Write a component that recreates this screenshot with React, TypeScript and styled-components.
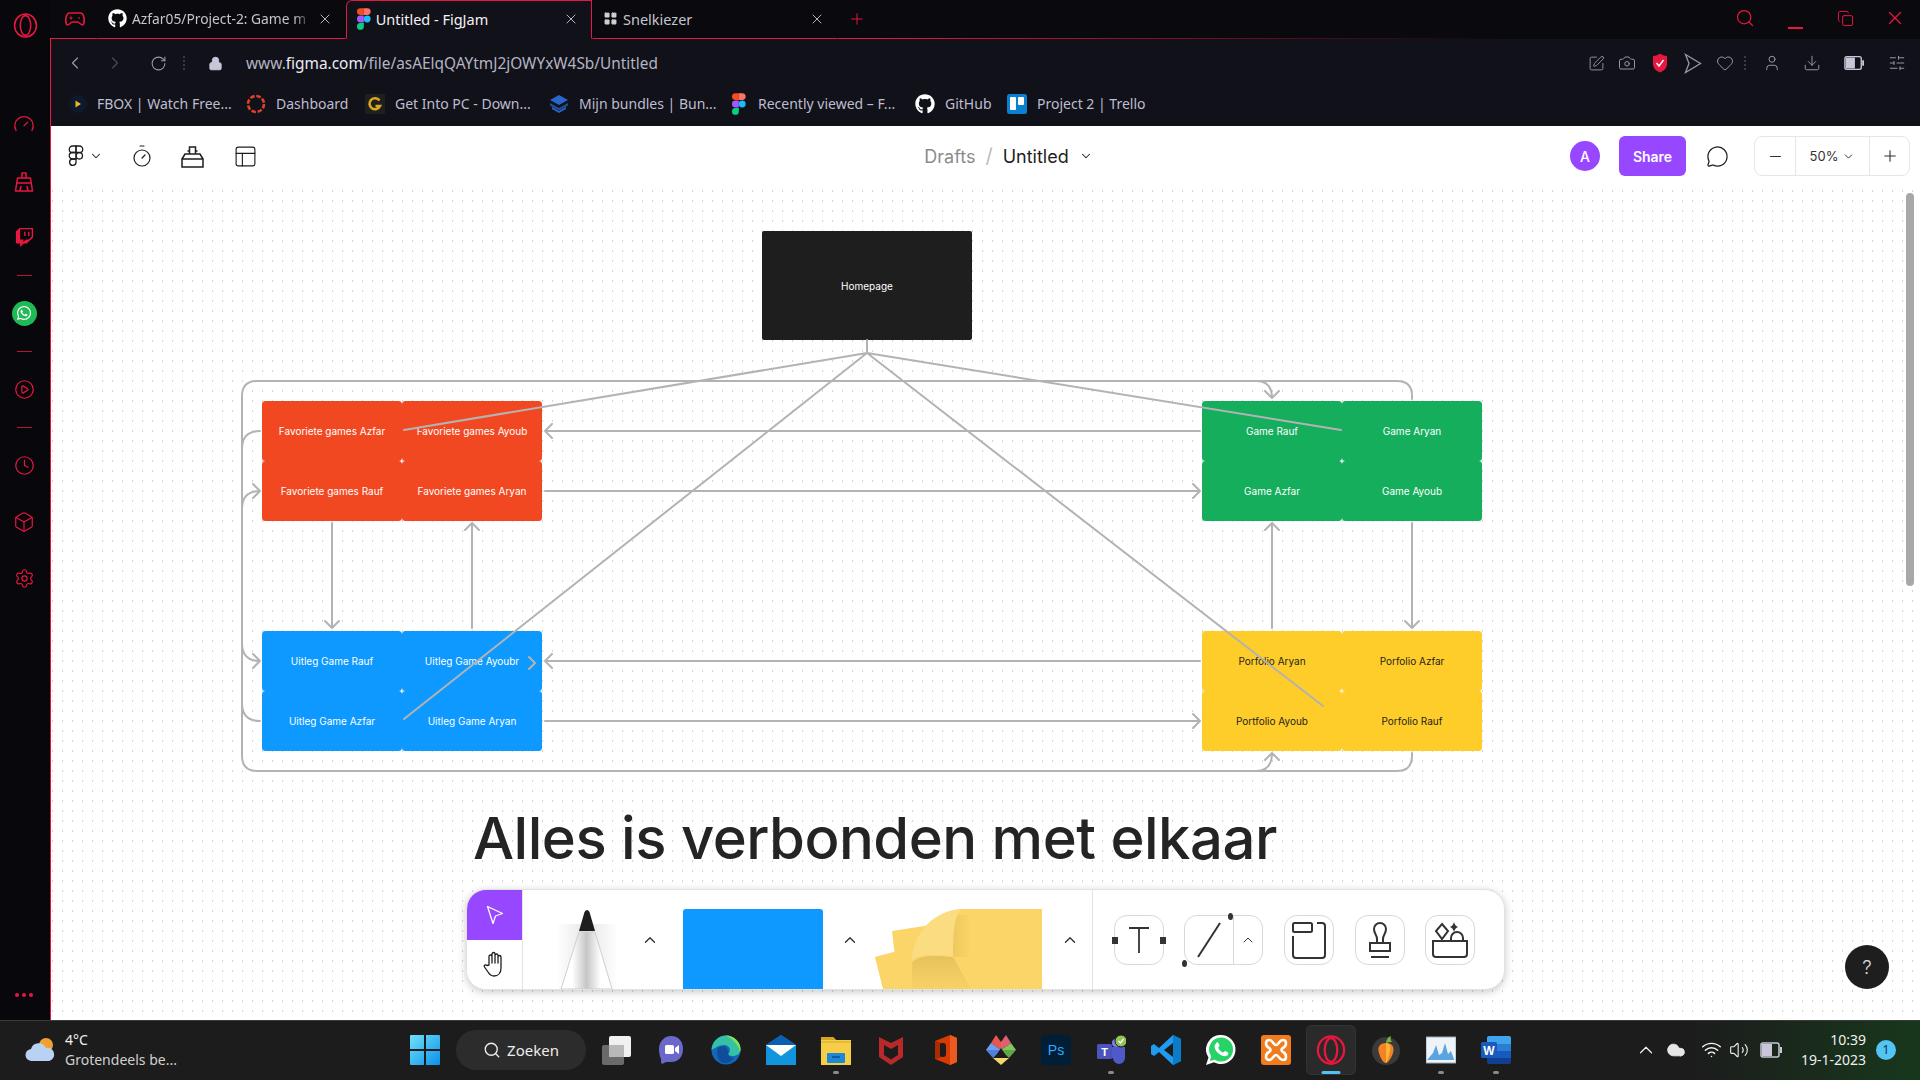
import React from "react";
import styled, { createGlobalStyle } from "styled-components";
import {
  ChevronLeft, ChevronRight, RotateCw, Lock, Search, X, Plus, Minus, Copy, SquarePen, Camera, Heart, User,
  Download, SlidersHorizontal, Timer, PanelsTopLeft, MessageCircle, ChevronDown, ChevronUp, CirclePlay, Clock, Box,
  Settings, Gauge, Cloud, Wifi, Volume2, LayoutGrid,
} from "lucide-react";
import { FaGithub, FaTwitch, FaWhatsapp } from "react-icons/fa";

const Global = createGlobalStyle`
  html, body { margin: 0; padding: 0; background: #000; }
  * { box-sizing: border-box; }
`;

const red = "#e8173f";
const ui = `"Noto Sans", "Open Sans", sans-serif`;
const inter = `Inter, "Noto Sans", sans-serif`;

const Screen = styled.div`
  width: 1920px; height: 1080px; display: flex; flex-direction: column; overflow: hidden; font-family: ${ui};
`;
const Main = styled.div`display: flex; height: 1020px;`;

/* ---- left rail ---- */
const Side = styled.aside`width: 51px; display: flex; flex-direction: column; background: #07070c;`;
const SideLogo = styled.div`height: 38px; padding: 13px 1px 0 0; display: flex; justify-content: center; color: ${red};`;
const Rail = styled.div`
  flex: 1; display: flex; flex-direction: column; align-items: center; padding: 67px 2px 18px 0;
  border-right: 1px solid ${red}; color: ${red};
`;
const RailSlot = styled.div<{ $gap?: number }>`
  height: 38px; margin-top: ${p => p.$gap || 0}px; display: flex; align-items: center; justify-content: center; flex: none;
`;
const RailSep = styled.div`width: 15px; height: 1px; background: ${red}; opacity: .8;`;
const GreenDot = styled.div`
  width: 25px; height: 25px; border-radius: 50%; background: #1fb955; color: #fff; display: flex; align-items: center; justify-content: center;
`;
const RailDots = styled.div`margin-top: auto; display: flex; gap: 3px; height: 14px; align-items: center;`;
const RailDot = styled.i`width: 4px; height: 4px; border-radius: 50%; background: ${red}; display: block;`;

/* ---- browser chrome ---- */
const Content = styled.div`flex: 1; display: flex; flex-direction: column; min-width: 0; background: #11111a;`;
const TabBar = styled.div`height: 39px; display: flex; background: #09090e;`;
const GameSlot = styled.div`
  width: 46px; display: flex; align-items: center; justify-content: center; color: ${red}; border-bottom: 1px solid ${red}; padding-left: 2px;
`;
const Tab = styled.div<{ $active?: boolean; $w: number }>`
  width: ${p => p.$w}px; display: flex; align-items: center; gap: 5px; padding: 0 12px 2px 10px; font-size: 14.5px; flex: none;
  color: ${p => (p.$active ? "#f2f2f6" : "#c4c4cc")};
  background: ${p => (p.$active ? "#11111a" : "transparent")};
  border-bottom: 1px solid ${p => (p.$active ? "#11111a" : red)};
  border-top: 1px solid ${p => (p.$active ? red : "transparent")};
  border-left: 1px solid ${p => (p.$active ? red : "transparent")};
  border-right: 1px solid ${p => (p.$active ? red : "transparent")};
  border-top-left-radius: ${p => (p.$active ? 6 : 0)}px;
`;
const TabTitle = styled.span<{ $fade?: boolean }>`
  flex: 1; white-space: nowrap; min-width: 0;
  ${p => p.$fade && "font-size: 13.8px; -webkit-mask-image: linear-gradient(90deg,#000 90%,transparent); mask-image: linear-gradient(90deg,#000 90%,transparent);"}
`;
const TabClose = styled.span`display: flex; color: #c4c4cc; flex: none;`;
const NewTab = styled.div`
  width: 37px; display: flex; align-items: center; justify-content: center; color: ${red}; border-bottom: 1px solid ${red};
`;
const TabFill = styled.div`
  flex: 1; height: 39px; padding-bottom: 1px; background: linear-gradient(90deg, ${red}, #09090e 60%) bottom / 100% 1px no-repeat;
  display: flex; justify-content: flex-end; align-items: center; color: ${red};
`;
const WinBtn = styled.div`width: 50px; display: flex; justify-content: center; align-items: center; height: 38px; padding-bottom: 2px;`;
const WinMin = styled.i`display: block; width: 15px; height: 1.5px; background: ${red}; margin-top: 20px;`;

const AddressRow = styled.div`height: 48px; display: flex; align-items: center; padding: 0 13px 0 14px; color: #9a9aa6;`;
const NavBtn = styled.div<{ $ml?: number; $c?: string }>`
  width: 20px; height: 20px; display: flex; align-items: center; justify-content: center; flex: none;
  margin-left: ${p => p.$ml || 0}px; color: ${p => p.$c || "inherit"};
`;
const DotSep = styled.i<{ $ml?: number }>`
  display: block; height: 14px; width: 0; border-left: 2px dotted #3a3a46; flex: none; margin-left: ${p => p.$ml || 0}px;
`;
const Url = styled.div`margin-left: 21px; font-size: 15.4px; color: #b4b4c2; white-space: nowrap; flex: 1; b { font-weight: 400; color: #ecebf2; }`;
const BookmarkRow = styled.div`height: 39px; display: flex; padding: 0 0 6px 18px; align-items: center;`;
const Bookmark = styled.div<{ $w: number }>`
  width: ${p => p.$w}px; flex: none; display: flex; align-items: center; gap: 10px; font-size: 14px; color: #bdbdcf; white-space: nowrap;
`;
const BookmarkGlyph = styled.span`width: 18px; display: flex; justify-content: center; flex: none;`;

/* ---- figma header ---- */
const Figma = styled.div`flex: 1; display: flex; flex-direction: column; background: #fff; min-height: 0;`;
const Header = styled.header`height: 64px; display: grid; grid-template-columns: 1fr auto 1fr; align-items: center; font-family: ${inter}; color: #1e1e1e; padding: 0 10px 4px 17px;`;
const HeadLeft = styled.div`display: flex; align-items: center;`;
const HeadTool = styled.div<{ $ml?: number }>`display: flex; align-items: center; margin-left: ${p => p.$ml || 0}px;`;
const Crumbs = styled.div`display: flex; align-items: center; font-size: 18px; margin-left: 39px;`;
const Crumb = styled.span<{ $muted?: boolean }>`color: ${p => (p.$muted ? "#8c8c8c" : "#1e1e1e")};`;
const Slash = styled.span`color: #bbb; margin: 0 10px; font-size: 20px;`;
const HeadRight = styled.div`display: flex; align-items: center; justify-content: flex-end;`;
const Avatar = styled.div`width: 30px; height: 30px; border-radius: 50%; background: #9747ff; color: #fff; font-size: 14px; font-weight: 500; display: flex; align-items: center; justify-content: center;`;
const ShareBtn = styled.div`width: 67px; height: 40px; margin-left: 19px; background: #9747ff; border-radius: 6px; color: #fff; font-size: 14px; font-weight: 600; display: flex; align-items: center; justify-content: center;`;
const CommentSlot = styled.div`width: 62px; margin-right: 6px; display: flex; justify-content: center; color: #1e1e1e;`;
const ZoomGroup = styled.div`width: 156px; height: 40px; border: 1px solid #e6e6e6; border-radius: 8px; display: grid; grid-template-columns: 40px 75px 1fr; align-items: center;`;
const ZoomCell = styled.div<{ $mid?: boolean }>`
  height: 100%; display: flex; align-items: center; justify-content: center; gap: 4px; font-size: 13px; color: #333;
  ${p => p.$mid && "border-left: 1px solid #e6e6e6; border-right: 1px solid #e6e6e6;"}
`;

/* ---- canvas ---- */
const Canvas = styled.div`
  flex: 1; position: relative; overflow: hidden; background-color: #fff;
  background-image: radial-gradient(circle at 1.5px 1px, #d4d4d4 .9px, transparent 1.1px);
  background-size: 10px 10px;
`;
const Wires = styled.svg`position: absolute; left: 0; top: 0; pointer-events: none;`;
const HomeNode = styled.div`
  position: absolute; left: 711px; top: 41px; width: 210px; height: 109px; background: #1e1e1e; border-radius: 2px; color: #fff;
  font: 400 10px ${inter}; display: flex; align-items: center; justify-content: center;
`;
const Cluster = styled.div<{ $x: number; $y: number }>`
  position: absolute; left: ${p => p.$x}px; top: ${p => p.$y}px; display: grid; grid-template-columns: 140px 140px; grid-auto-rows: 60px;
`;
const Tile = styled.div<{ $bg: string; $dark?: boolean }>`
  background: ${p => p.$bg}; color: ${p => (p.$dark ? "#1e1e1e" : "#fff")}; border-radius: 3.5px;
  font: 400 10px ${inter}; display: flex; align-items: center; justify-content: center;
`;
const Heading = styled.h1`
  position: absolute; left: 422px; top: 611px; margin: 0; font: 500 58px/74px ${inter}; letter-spacing: -.5px; color: #242424; white-space: nowrap;
`;
const Scroll = styled.div`position: absolute; right: 6px; top: 3px; width: 8px; height: 393px; border-radius: 4px; background: #a8a8a8;`;
const Help = styled.div`
  position: absolute; right: 31px; bottom: 31px; width: 44px; height: 44px; border-radius: 50%; background: #1e1e1e; color: #ddd;
  font: 300 19px ${inter}; display: flex; align-items: center; justify-content: center;
`;

/* ---- tool dock ---- */
const Dock = styled.div`
  position: absolute; left: 415px; bottom: 30px; width: 1039px; height: 101px; background: #fff; border: 1px solid #e2e2e2; border-radius: 20px;
  box-shadow: 0 2px 8px rgba(0,0,0,.22); overflow: hidden; display: flex; align-items: stretch;
`;
const PointerCol = styled.div`width: 56px; flex: none; display: flex; flex-direction: column; border-right: 1px solid #e2e2e2;`;
const PointerCell = styled.div<{ $on?: boolean }>`
  flex: 1; display: flex; align-items: center; justify-content: center; background: ${p => (p.$on ? "#9747ff" : "#fff")}; color: ${p => (p.$on ? "#fff" : "#1e1e1e")};
`;
const Art = styled.div<{ $ml: number }>`margin-left: ${p => p.$ml}px; align-self: flex-end; display: flex; flex: none; height: 80px;`;
const DockChevron = styled.div<{ $ml: number }>`align-self: center; margin-left: ${p => p.$ml}px; display: flex; color: #333; flex: none;`;
const ShapeArt = styled.div`width: 140px; height: 80px; background: #0d99ff; border-radius: 3px 3px 0 0;`;
const DockDivider = styled.div<{ $ml: number }>`width: 1px; background: #e2e2e2; margin-left: ${p => p.$ml}px; flex: none;`;
const ToolBtn = styled.div<{ $ml: number; $w?: number }>`
  width: ${p => p.$w || 50}px; height: 50px; margin-left: ${p => p.$ml}px; align-self: center; flex: none; border: 1px solid #d8d8d8; border-radius: 13px;
  display: flex; align-items: center; justify-content: center; position: relative; color: #333;
`;
const LineChevron = styled.div`width: 29px; height: 100%; border-left: 1px solid #d8d8d8; display: flex; align-items: center; justify-content: center; flex: none;`;

/* ---- taskbar ---- */
const Taskbar = styled.footer`
  height: 60px; display: flex; align-items: center; padding: 0 0 2px 25px; color: #fff; border-top: 1px solid #3a3a3a;
  background: linear-gradient(90deg, #1c1c1c 88%, #17381c 100%);
`;
const Weather = styled.div`width: 385px; flex: none; display: flex; align-items: center; gap: 8px;`;
const WeatherText = styled.div`font-size: 14px; line-height: 20px; color: #f0f0f0; white-space: nowrap; span { display: block; color: #d0d0d0; }`;
const StartSlot = styled.div`width: 30px; height: 30px; flex: none; display: flex;`;
const SearchPill = styled.div`
  width: 130px; height: 40px; margin: 0 2.5px 0 16px; flex: none; border-radius: 20px; background: #2c2c2c; display: flex; align-items: center; justify-content: center; gap: 6px;
  font-size: 15px; color: #eee;
`;
const TaskSlot = styled.div<{ $active?: boolean }>`
  width: 55px; height: 50px; flex: none; display: flex; align-items: center; justify-content: center; position: relative; border-radius: 6px;
  ${p => p.$active && "background: #2a2a2a; box-shadow: inset 0 0 0 1px #333; width: 50px; margin: 0 2.5px;"}
`;
const RunDot = styled.i<{ $active?: boolean }>`
  position: absolute; bottom: 1px; left: 50%; transform: translateX(-50%); height: 3px; border-radius: 2px; display: block;
  width: ${p => (p.$active ? 19 : 6)}px; background: ${p => (p.$active ? "#4fc3f7" : "#8a8a8a")};
`;
const Tray = styled.div`margin-left: auto; display: flex; align-items: center; padding-right: 24px;`;
const TrayIcon = styled.div<{ $ml?: number }>`width: 28px; display: flex; justify-content: center; margin-left: ${p => p.$ml || 0}px; color: #f2f2f2; flex: none;`;
const ClockBox = styled.div`width: 76px; margin-left: 5px; text-align: right; font-size: 14px; line-height: 20px; color: #f0f0f0;`;
const Badge = styled.div`width: 20px; height: 20px; border-radius: 50%; margin-left: 10px; background: #52c5f5; color: #10303f; font-size: 12px; display: flex; align-items: center; justify-content: center;`;

/* ---- drawings ---- */
const OperaMark = ({ s = 24, w = 1.5 }: { s?: number; w?: number }) => (
  <svg width={s} height={s} viewBox="0 0 24 24" fill="none" stroke="currentColor" strokeWidth={w}>
    <ellipse cx="12" cy="12" rx="10.5" ry="11" /><ellipse cx="12" cy="12" rx="5" ry="9.5" />
  </svg>
);
const Gamepad = () => (
  <svg width="20" height="18" viewBox="0 0 20 18" fill="none" stroke="currentColor" strokeWidth="1.7" strokeLinejoin="round">
    <path d="M4.5 3h11c2 0 3 2 3.500 5 .5 3.500 0 7-1.500 7-2 0-3-3-5-3H7.500c-2 0-3 3-5 3C1 15 .5 11.500 1 8c.5-3 1.500-5 3.500-5Z" />
    <path d="M6 6.500v3M4.500 8h3M13 8h2" strokeWidth="1.200" />
  </svg>
);
const FigmaColor = ({ h = 22 }: { h?: number }) => (
  <svg width={h * 0.62} height={h} viewBox="0 0 12 19">
    <path d="M3 0h3v6H3a3 3 0 0 1 0-6Z" fill="#f24e1e" /><path d="M6 0h3a3 3 0 0 1 0 6H6Z" fill="#ff7262" />
    <path d="M3 6.500h3v6H3a3 3 0 0 1 0-6Z" fill="#a259ff" /><circle cx="9" cy="9.500" r="3" fill="#1abcfe" />
    <path d="M3 13h3v3a3 3 0 1 1-3-3Z" fill="#0acf83" />
  </svg>
);
const Shield = () => (
  <svg width="16" height="20" viewBox="0 0 16 20"><path d="M1 3c3 0 5-1 7-2.500C10 2 12 3 15 3v8c0 4-3 7-7 8.500C4 18 1 15 1 11Z" fill={red} /><path d="M4.500 10l2.500 3 4.500-6" stroke="#fff" strokeWidth="1.400" fill="none" /></svg>
);
const Flow = () => (
  <svg width="18" height="21" viewBox="0 0 18 21" fill="none" stroke="currentColor" strokeWidth="1.300"><path d="M1.500 1.500 16.500 10.500 1.500 19.500 5 10.500Z" /></svg>
);
const BatteryHalf = () => (
  <svg width="22" height="16" viewBox="0 0 22 16"><rect x="1" y="1" width="18" height="14" rx="2" fill="none" stroke="#c9c6da" strokeWidth="1.500" /><rect x="2" y="2" width="10" height="12" fill="#c9c6da" /><rect x="20" y="5" width="2" height="6" fill="#c9c6da" /></svg>
);
const FboxIcon = () => (
  <svg width="18" height="20" viewBox="0 0 18 20"><circle cx="9" cy="10" r="9" fill="#0e1a2b" /><path d="M6.500 6.500 12 10l-5.500 3.500Z" fill="#f0b429" /></svg>
);
const RingIcon = () => (
  <svg width="20" height="20" viewBox="0 0 20 20" fill="none" stroke="#e0402a" strokeWidth="2.600"><circle cx="10" cy="10" r="8" strokeDasharray="4.500 1.800" /></svg>
);
const GIcon = () => (
  <svg width="20" height="20" viewBox="0 0 20 20"><rect width="20" height="20" rx="1" fill="#1f1f1f" /><path d="M14.500 6.500A5.500 5.500 0 1 0 15 12h-4.500" fill="none" stroke="#d9a820" strokeWidth="2.600" /></svg>
);
const StackIcon = () => (
  <svg width="20" height="20" viewBox="0 0 20 20" fill="#2a66c8"><path d="M10 1 1 6l9 5 9-5Z" /><path d="M1 9l9 5 9-5v2.500l-9 5-9-5Z" fill="#1e4f9e" /><path d="M3 13l7 4 7-4v2l-7 4-7-4Z" fill="#2a66c8" /></svg>
);
const TrelloIcon = () => (
  <svg width="20" height="20" viewBox="0 0 20 20"><rect width="20" height="20" rx="2.500" fill="#0c80d0" /><rect x="3" y="3" width="6" height="13" rx="1" fill="#fff" /><rect x="11" y="3" width="6" height="8" rx="1" fill="#fff" /></svg>
);
const FigmaOutline = () => (
  <svg width="16" height="22" viewBox="0 0 16 22" fill="none" stroke="currentColor" strokeWidth="1.300">
    <path d="M8 1H4.500a3.200 3.200 0 0 0 0 6.500H8Z" /><path d="M8 1h3.500a3.200 3.200 0 0 1 0 6.500H8Z" /><path d="M8 7.500H4.500a3.200 3.200 0 0 0 0 6.500H8Z" /><circle cx="11.300" cy="10.800" r="3.200" /><path d="M8 14H4.500a3.200 3.200 0 1 0 3.500 3.200Z" />
  </svg>
);
const ToolboxIcon = () => (
  <svg width="23" height="23" viewBox="0 0 23 23" fill="none" stroke="currentColor" strokeWidth="1.500"><path d="M1 14v8h21v-8ZM1 14l3-5h15l3 5M8.500 9V2h6v7M8.500 6h-2M14.500 6h2" /></svg>
);
const Broom = () => (
  <svg width="20" height="20" viewBox="0 0 20 20" fill="none" stroke="currentColor" strokeWidth="1.500" strokeLinejoin="round"><path d="M8 6V1h4v5M3.500 6h13l2 13H1.500ZM6 19l1-5M14 19l-1-5M3 11h14" /></svg>
);
const PointerIcon = () => (
  <svg width="18" height="20" viewBox="0 0 18 20" fill="none" stroke="#fff" strokeWidth="1.300" strokeLinejoin="round"><path d="M1.500 1.500 16.500 8.500 9.500 11 7 18.500Z" /></svg>
);
const HandIcon = () => (
  <svg width="24" height="26" viewBox="0 0 24 26" fill="none" stroke="currentColor" strokeWidth="1.300" strokeLinecap="round" strokeLinejoin="round"><path d="M6 14V5.500a1.500 1.500 0 0 1 3 0V3a1.500 1.500 0 0 1 3 0v1.500a1.500 1.500 0 0 1 3 0V6a1.500 1.500 0 0 1 3 0v11c0 5-3 8-7 8-3 0-4.500-1.500-6-4L1.500 16c-1-1.500 1-3 2.500-1.500Z M9 5v7 M12 4v8 M15 5v7" /></svg>
);
const PenArt = () => (
  <svg width="62" height="80" viewBox="0 0 62 80">
    <defs>
      <linearGradient id="penBody" x1="0" x2="1" y1="0" y2="0"><stop offset=".22" stopColor="#fff" /><stop offset=".5" stopColor="#c6c6c6" /><stop offset=".78" stopColor="#fff" /></linearGradient>
      <linearGradient id="penGlow" x1="0" x2="1" y1="0" y2="0"><stop offset="0" stopColor="#fff" /><stop offset=".5" stopColor="#e6e6e6" /><stop offset="1" stopColor="#fff" /></linearGradient>
    </defs>
    <rect x="0" y="15" width="62" height="65" fill="url(#penGlow)" />
    <path d="M23 23H39L56 80H5Z" fill="url(#penBody)" stroke="#cfcfcf" />
    <path d="M28.500 3Q31 -1 33.500 3L39 22H23Z" fill="#1e1e1e" />
  </svg>
);
const StickyArt = () => (
  <svg width="167" height="80" viewBox="0 0 167 80">
    <defs>
      <linearGradient id="fold" x1="0" x2="0" y1="0" y2="1"><stop offset="0" stopColor="#e6c25c" /><stop offset="1" stopColor="#f8d266" /></linearGradient>
      <linearGradient id="foldEdge" x1="0" x2="1" y1="0" y2="0"><stop offset="0" stopColor="#eec95f" /><stop offset="1" stopColor="#fbd568" /></linearGradient>
    </defs>
    <path d="M0 48 22 42 36 80H8Z" fill="#fbd568" />
    <path d="M17 22 56 16 40 80H24Z" fill="#fbd568" />
    <path d="M37 80V50C37 28 55 3 86 0H167V80Z" fill="#fbd568" />
    <path d="M78 6H96V48H78Z" fill="url(#foldEdge)" />
    <path d="M37 80V54C42 46 60 46 78 48L96 80Z" fill="url(#fold)" />
    <path d="M37 52C37 28 55 3 86 0 80 6 78 20 78 48 60 45 42 45 37 52Z" fill="#fcdc80" />
  </svg>
);
const TextTool = () => (
  <svg width="24" height="30" viewBox="0 0 24 30" fill="none" stroke="#333" strokeWidth="1.800"><path d="M2 3H22M12 3V28" /></svg>
);
const Handle = styled.i<{ $side: "l" | "r" }>`
  position: absolute; top: 21px; width: 6px; height: 7px; background: #333; ${p => (p.$side === "l" ? "left: -3px;" : "right: -3px;")}
`;
const LineDot = styled.i<{ $pos: "a" | "b" }>`
  position: absolute; width: 5px; height: 7px; border-radius: 50%; background: #333;
  ${p => (p.$pos === "a" ? "right: 29px; top: -3px;" : "left: -3px; bottom: -3px;")}
`;
const LineBody = styled.div`flex: 1; height: 100%; display: flex; align-items: center; justify-content: center;`;
const SectionIcon = () => (
  <svg width="36" height="38" viewBox="0 0 36 38" fill="none" stroke="#333" strokeWidth="2"><rect x="2" y="2" width="19" height="9" rx="1.500" /><path d="M26 2h5a3 3 0 0 1 3 3v29a3 3 0 0 1-3 3H5a3 3 0 0 1-3-3V15" /></svg>
);
const StampIcon = () => (
  <svg width="24" height="38" viewBox="0 0 24 38" fill="none" stroke="#333" strokeWidth="2"><path d="M9 18c0-4-3-5-3-10a6 6 0 0 1 12 0c0 5-3 6-3 10v4H9ZM2 22h20v8H2ZM3 36h18" /></svg>
);
const CartIcon = () => (
  <svg width="40" height="38" viewBox="0 0 40 38" fill="none" stroke="#333" strokeWidth="2"><path d="M12 3 18 10 12 18 6 10ZM3 20H37V33a3 3 0 0 1-3 3H6a3 3 0 0 1-3-3ZM21 20v-3a6 6 0 0 1 12 0v3" /><path d="M24 1q1 4 4 5-3 1-4 5-1-4-4-5 3-1 4-5Z" fill="#333" stroke="none" /></svg>
);

const WeatherIcon = () => (
  <svg width="32" height="32" viewBox="0 0 32 32"><circle cx="21" cy="11" r="7" fill="#f0a030" /><path d="M7 27a6 6 0 0 1-1-12 8 8 0 0 1 15-1 6.500 6.500 0 0 1 3 13Z" fill="#b9d2f2" /></svg>
);
const StartIcon = () => (
  <svg width="30" height="30" viewBox="0 0 30 30">
    <defs><linearGradient id="st" x1="0" y1="0" x2="1" y2="1"><stop stopColor="#6fe3fb" /><stop offset="1" stopColor="#0c8fe8" /></linearGradient></defs>
    <path d="M0 1a1 1 0 0 1 1-1h13v14H0ZM16 0h13a1 1 0 0 1 1 1v13H16ZM0 16h14v14H1a1 1 0 0 1-1-1ZM16 16h14v13a1 1 0 0 1-1 1H16Z" fill="url(#st)" />
  </svg>
);
const TI = ({ children }: { children: React.ReactNode }) => <svg width="30" height="30" viewBox="0 0 30 30">{children}</svg>;
const icons: Record<string, React.ReactNode> = {
  task: <TI><rect x="1" y="10" width="22" height="20" rx="2" fill="#6a6a6a" /><rect x="8" y="1" width="22" height="21" rx="2" fill="#f0f0f0" /><rect x="8" y="10" width="15" height="12" fill="#b8b8b8" /></TI>,
  meet: <TI><path d="M15 1c8 0 12 6 12 13s-4 13-12 13c-3 0-5-.5-7 1-1 1-3 1-3-1v-3C3.500 21 3 17 3 14 3 7 8 1 15 1Z" fill="#6b68c9" /><rect x="9" y="10" width="9" height="9" rx="1.500" fill="#fff" /><path d="M19 13l4-3v9l-4-3Z" fill="#fff" /></TI>,
  edge: <TI><circle cx="15" cy="15" r="14.500" fill="#1168b8" /><path d="M.5 15C1 6 8 .5 15 .5 23 .5 29.500 7 29.500 14c0 5-4 7-7.500 7-3 0-5-1-5-2 3-1 3-8-3-9C9 9.500 4 13 .5 15Z" fill="#35c1a5" /><path d="M15 .5c8 0 14.500 6.500 14.500 13.500 0 1-.2 2-.5 3-1-7-7-13-14-16.500Z" fill="#8be24f" /><path d="M7 13c5-3 10-1 10 4 0 4 3 6 6 6-2 3-6 5-9 5-7 0-9-9-7-15Z" fill="#0f4c99" /></TI>,
  mail: <TI><path d="M0 10 15 0l15 10v20H0Z" fill="#1295dc" /><path d="M0 10h30L15 21Z" fill="#fff" /><path d="M15 0 0 10h30Z" fill="#0a5fb0" /></TI>,
  folder: <TI><path d="M0 2h12l3 3h15v25H0Z" fill="#f5cd47" /><path d="M0 2h12l3 3H0Z" fill="#d8a320" /><path d="M0 6h30v2H0Z" fill="#e6b93a" /><rect x="6" y="18" width="18" height="10" rx="1" fill="#1d88d8" /><rect x="11" y="21" width="8" height="2" fill="#0b5fa8" /></TI>,
  mcafee: <TI><path d="M3 2 15 8l12-6v20l-12 8L3 22Z" fill="#b82a2a" /><path d="M8 10l7 4 7-4v10l-7 4.500L8 20Z" fill="#1c1c1c" /></TI>,
  office: <TI><path d="M4 6 19 0l7 3v24l-7 3-15-6Z" fill="#d83b01" /><path d="M19 0v30l7-3V3Z" fill="#eb5a20" /><rect x="8" y="8" width="7" height="14" rx="3" fill="#1c1c1c" /><path d="M4 6l5 1v16l-5 1Z" fill="#a92a05" /></TI>,
  git: <TI><path d="M15 15 5 8l5-8 5 7Z" fill="#e8574e" /><path d="M15 15 0 15l5-7Z" fill="#6ca0f5" /><path d="M15 15 0 15l7 8Z" fill="#4e82d8" /><path d="M15 7l5-7 5 8-10 7Z" fill="#e06070" /><path d="M15 15h15l-5-7Z" fill="#83c560" /><path d="M15 15h15l-7 8Z" fill="#5fa84a" /><path d="M7 23h16l-8 7Z" fill="#f5d76a" /><path d="M15 13 11 19l4 4 4-4Z" fill="#1c1c1c" /></TI>,
  ps: <TI><rect width="30" height="30" rx="4" fill="#001e36" /><text x="15" y="20" textAnchor="middle" fontFamily="Liberation Sans, sans-serif" fontSize="14" fill="#31a8ff">Ps</text></TI>,
  teams: <TI><circle cx="20" cy="8" r="4" fill="#7b83eb" /><path d="M13 12h16v11a6 6 0 0 1-12 0h-4Z" fill="#5059c9" /><rect x="1" y="9" width="15" height="15" rx="1.500" fill="#4b53bc" /><text x="8.500" y="20.500" textAnchor="middle" fontFamily="Liberation Sans, sans-serif" fontWeight="700" fontSize="11" fill="#fff">T</text><circle cx="25" cy="6" r="6" fill="#92c353" stroke="#1c1c1c" /><path d="M22.500 6l2 2 3-4" stroke="#fff" fill="none" strokeWidth="1.300" /></TI>,
  vscode: <TI><path d="M22 0 30 4V26L22 30 8 17 3 21 0 19V11L3 9 8 13Z" fill="#1f9cf0" /><path d="M22 0 30 4V26L22 30Z" fill="#0a7cc9" /><path d="M22 8 22 22 13 15Z" fill="#1c1c1c" /></TI>,
  whats: <TI><path d="M15 0a14.500 14.500 0 0 1 0 29c-2.500 0-5-.6-7-1.800L0 30l2.500-7.500A14.500 14.500 0 0 1 15 0Z" fill="#fff" /><path d="M15 2.500a12 12 0 0 1 0 24c-2.300 0-4.500-.7-6.300-1.800L3.800 26l1.400-4.700A12 12 0 0 1 15 2.500Z" fill="#25d366" /><path d="M10 8c1-1 2-1 2.500 0l1 2.500c.3.700-1.500 2-1.200 2.500 1 2 2.500 3.500 4.700 4.500.5.200 1.700-1.700 2.300-1.500l2.700 1.500c.8.500.3 2-.5 2.800-2 1.800-5 1-8-1-3-2.300-5-5-5-8 0-1 .7-2 1.500-2.800Z" fill="#fff" /></TI>,
  xampp: <TI><rect width="30" height="30" rx="3" fill="#f07c1e" /><path d="M8 5c4 0 4 5 7 5s3-5 7-5 4 6 0 8c-2 1-2 3 0 4 4 2 4 8 0 8s-4-5-7-5-3 5-7 5-4-6 0-8c2-1 2-3 0-4-4-2-4-8 0-8Z" fill="none" stroke="#fff" strokeWidth="2.600" /></TI>,
  fl: <TI><circle cx="15" cy="16" r="14" fill="#3a3a3a" /><path d="M15 8c6 0 9 4 7 10-1 4-5 10-7 10-3 0-6-6-7-10-2-6 1-10 7-10Z" fill="#f58220" /><path d="M15 8c3 0 5 2 4 8-1 5-3 12-4 12Z" fill="#f9b43c" /><path d="M15 8c0-3 2-6 5-7-1 3 0 5 1 6-2 0-4 0-6 1Z" fill="#7cb342" /></TI>,
  mon: <TI><rect x="0" y="2" width="30" height="26" fill="#eef3f8" stroke="#9ab" /><path d="M1 25 7 18l3-8 3 10 3-2 3-10 3 11 3-3 3 8v1H1Z" fill="#5ca4e0" /></TI>,
  word: <TI><path d="M8 1h20a2 2 0 0 1 2 2v6H6V3a2 2 0 0 1 2-2Z" fill="#41a5ee" /><rect x="6" y="9" width="24" height="7" fill="#2b7cd3" /><rect x="6" y="16" width="24" height="7" fill="#185abd" /><path d="M6 23h24v4a2 2 0 0 1-2 2H8a2 2 0 0 1-2-2Z" fill="#103f91" /><rect x="0" y="7" width="16" height="16" rx="1.500" fill="#185abd" /><text x="8" y="19.500" textAnchor="middle" fontFamily="Liberation Sans, sans-serif" fontWeight="700" fontSize="12" fill="#fff">W</text></TI>,
};

const dockBar: { k: string; run?: boolean }[] = [
  { k: "task" }, { k: "meet" }, { k: "edge" }, { k: "mail" }, { k: "folder", run: true }, { k: "mcafee" }, { k: "office" }, { k: "git" },
  { k: "ps" }, { k: "teams", run: true }, { k: "vscode" }, { k: "whats" }, { k: "xampp" },
];

const W = "#b3b3b3";
const Connectors = () => (
  <Wires width="1869" height="830" viewBox="51 190 1869 830" fill="none" stroke={W} strokeWidth="2" strokeLinejoin="round" strokeLinecap="round">
    <path d="M867 340V353L404 430M867 353 404 719M867 353 1341 430M867 353 1323 706" />
    <path d="M1200 431H545M552 424l-7 7 7 7" />
    <path d="M545 491H1200M1193 484l7 7-7 7" />
    <path d="M1200 661H545M552 654l-7 7 7 7" />
    <path d="M545 721H1200M1193 714l7 7-7 7" />
    <path d="M332 523V628M325 621l7 7 7-7" />
    <path d="M472 628V523M465 530l7-7 7 7" />
    <path d="M1272 628V523M1265 530l7-7 7 7" />
    <path d="M1412 523V628M1405 621l7 7 7-7" />
    <path d="M1412 399V396Q1412 381 1397 381H257Q242 381 242 396V756Q242 771 257 771H1397Q1412 771 1412 756V753" />
    <path d="M1256 381Q1272 381 1272 398M1265 391l7 7 7-7" />
    <path d="M1256 771Q1272 771 1272 753M1265 760l7-7 7 7" />
    <path d="M260 431Q242 431 242 449" />
    <path d="M242 509Q242 491 260 491M253 484l7 7-7 7" />
    <path d="M242 643Q242 661 260 661M253 654l7 7-7 7" />
    <path d="M242 703Q242 721 260 721" />
    <path d="M529 657l6 6-6 6" />
  </Wires>
);

export default function App() {
  return (
    <Screen>
      <Global />
      <Main>
        <Side>
          <SideLogo><OperaMark s={25} /></SideLogo>
          <Rail>
            <RailSlot><Gauge size={22} strokeWidth={1.4} /></RailSlot>
            <RailSlot $gap={20}><Broom /></RailSlot>
            <RailSlot $gap={17}><FaTwitch size={19} /></RailSlot>
            <RailSlot><RailSep /></RailSlot>
            <RailSlot><GreenDot><FaWhatsapp size={16} /></GreenDot></RailSlot>
            <RailSlot><RailSep /></RailSlot>
            <RailSlot><CirclePlay size={21} strokeWidth={1.4} /></RailSlot>
            <RailSlot><RailSep /></RailSlot>
            <RailSlot><Clock size={21} strokeWidth={1.4} /></RailSlot>
            <RailSlot $gap={19}><Box size={22} strokeWidth={1.3} /></RailSlot>
            <RailSlot $gap={18}><Settings size={21} strokeWidth={1.3} /></RailSlot>
            <RailDots><RailDot /><RailDot /><RailDot /></RailDots>
          </Rail>
        </Side>
        <Content>
          <TabBar>
            <GameSlot><Gamepad /></GameSlot>
            <Tab $w={249}>
              <FaGithub size={19} color="#fff" />
              <TabTitle $fade>Azfar05/Project-2: Game m</TabTitle>
              <TabClose><X size={16} strokeWidth={1.4} /></TabClose>
            </Tab>
            <Tab $active $w={246}>
              <FigmaColor />
              <TabTitle>Untitled - FigJam</TabTitle>
              <TabClose><X size={16} strokeWidth={1.4} /></TabClose>
            </Tab>
            <Tab $w={246}>
              <LayoutGrid size={15} fill="#d0d0d0" strokeWidth={1} />
              <TabTitle>Snelkiezer</TabTitle>
              <TabClose><X size={16} strokeWidth={1.4} /></TabClose>
            </Tab>
            <NewTab><Plus size={18} strokeWidth={1.3} /></NewTab>
            <TabFill>
              <WinBtn><Search size={20} strokeWidth={1.5} /></WinBtn>
              <WinBtn><WinMin /></WinBtn>
              <WinBtn><Copy size={17} strokeWidth={1.4} /></WinBtn>
              <WinBtn><X size={22} strokeWidth={1.4} /></WinBtn>
            </TabFill>
          </TabBar>
          <AddressRow>
            <NavBtn><ChevronLeft size={22} strokeWidth={1.4} /></NavBtn>
            <NavBtn $ml={20} $c="#4c4c58"><ChevronRight size={22} strokeWidth={1.4} /></NavBtn>
            <NavBtn $ml={23}><RotateCw size={17} strokeWidth={1.5} /></NavBtn>
            <DotSep $ml={15} />
            <NavBtn $ml={20} $c="#c9c6da"><Lock size={15} fill="#c9c6da" strokeWidth={1.600} /></NavBtn>
            <Url>www.<b>figma.com</b>/file/asAElqQAYtmJ2jOWYxW4Sb/Untitled</Url>
            <NavBtn><SquarePen size={17} strokeWidth={1.3} /></NavBtn>
            <NavBtn $ml={11}><Camera size={18} strokeWidth={1.3} /></NavBtn>
            <NavBtn $ml={13}><Shield /></NavBtn>
            <NavBtn $ml={13}><Flow /></NavBtn>
            <NavBtn $ml={12}><Heart size={18} strokeWidth={1.300} /></NavBtn>
            <DotSep $ml={9} />
            <NavBtn $ml={16}><User size={18} strokeWidth={1.300} /></NavBtn>
            <NavBtn $ml={20}><Download size={18} strokeWidth={1.300} /></NavBtn>
            <NavBtn $ml={22}><BatteryHalf /></NavBtn>
            <NavBtn $ml={23}><SlidersHorizontal size={18} strokeWidth={1.300} /></NavBtn>
          </AddressRow>
          <BookmarkRow>
            <Bookmark $w={177}><FboxIcon />FBOX | Watch Free...</Bookmark>
            <Bookmark $w={119}><RingIcon />Dashboard</Bookmark>
            <Bookmark $w={184}><GIcon />Get Into PC - Down...</Bookmark>
            <Bookmark $w={181}><StackIcon />Mijn bundles | Bun...</Bookmark>
            <Bookmark $w={185}><BookmarkGlyph><FigmaColor /></BookmarkGlyph>Recently viewed – F...</Bookmark>
            <Bookmark $w={92}><FaGithub size={20} color="#fff" />GitHub</Bookmark>
            <Bookmark $w={140}><TrelloIcon />Project 2 | Trello</Bookmark>
          </BookmarkRow>
          <Figma>
            <Header>
              <HeadLeft>
                <FigmaOutline />
                <HeadTool $ml={5}><ChevronDown size={14} strokeWidth={1.800} /></HeadTool>
                <HeadTool $ml={27}><Timer size={24} strokeWidth={1.200} /></HeadTool>
                <HeadTool $ml={27}><ToolboxIcon /></HeadTool>
                <HeadTool $ml={29}><PanelsTopLeft size={25} strokeWidth={1.100} /></HeadTool>
              </HeadLeft>
              <Crumbs>
                <Crumb $muted>Drafts</Crumb><Slash>/</Slash><Crumb>Untitled</Crumb>
                <HeadTool $ml={10}><ChevronDown size={14} strokeWidth={1.800} /></HeadTool>
              </Crumbs>
              <HeadRight>
                <Avatar>A</Avatar>
                <ShareBtn>Share</ShareBtn>
                <CommentSlot><MessageCircle size={23} strokeWidth={1.300} /></CommentSlot>
                <ZoomGroup>
                  <ZoomCell><Minus size={17} strokeWidth={1.500} /></ZoomCell>
                  <ZoomCell $mid>50%<ChevronDown size={13} strokeWidth={1.800} /></ZoomCell>
                  <ZoomCell><Plus size={18} strokeWidth={1.500} /></ZoomCell>
                </ZoomGroup>
              </HeadRight>
            </Header>
            <Canvas>
              <HomeNode>Homepage</HomeNode>
              <Cluster $x={211} $y={211}>
                <Tile $bg="#f24822">Favoriete games Azfar</Tile><Tile $bg="#f24822">Favoriete games Ayoub</Tile>
                <Tile $bg="#f24822">Favoriete games Rauf</Tile><Tile $bg="#f24822">Favoriete games Aryan</Tile>
              </Cluster>
              <Cluster $x={211} $y={441}>
                <Tile $bg="#0d99ff">Uitleg Game Rauf</Tile><Tile $bg="#0d99ff">Uitleg Game Ayoubr</Tile>
                <Tile $bg="#0d99ff">Uitleg Game Azfar</Tile><Tile $bg="#0d99ff">Uitleg Game Aryan</Tile>
              </Cluster>
              <Cluster $x={1151} $y={211}>
                <Tile $bg="#14ae5c">Game Rauf</Tile><Tile $bg="#14ae5c">Game Aryan</Tile>
                <Tile $bg="#14ae5c">Game Azfar</Tile><Tile $bg="#14ae5c">Game Ayoub</Tile>
              </Cluster>
              <Cluster $x={1151} $y={441}>
                <Tile $bg="#ffcd29" $dark>Porfolio Aryan</Tile><Tile $bg="#ffcd29" $dark>Porfolio Azfar</Tile>
                <Tile $bg="#ffcd29" $dark>Portfolio Ayoub</Tile><Tile $bg="#ffcd29" $dark>Porfolio Rauf</Tile>
              </Cluster>
              <Connectors />
              <Heading>Alles is verbonden met elkaar</Heading>
              <Scroll />
              <Dock>
                <PointerCol>
                  <PointerCell $on><PointerIcon /></PointerCell>
                  <PointerCell><HandIcon /></PointerCell>
                </PointerCol>
                <Art $ml={33}><PenArt /></Art>
                <DockChevron $ml={23}><ChevronUp size={18} strokeWidth={1.800} /></DockChevron>
                <Art $ml={24}><ShapeArt /></Art>
                <DockChevron $ml={18}><ChevronUp size={18} strokeWidth={1.800} /></DockChevron>
                <Art $ml={16}><StickyArt /></Art>
                <DockChevron $ml={19}><ChevronUp size={18} strokeWidth={1.800} /></DockChevron>
                <DockDivider $ml={13} />
                <ToolBtn $ml={21}><Handle $side="l" /><TextTool /><Handle $side="r" /></ToolBtn>
                <ToolBtn $ml={20} $w={79}>
                  <LineDot $pos="a" /><LineDot $pos="b" />
                  <LineBody><svg width="26" height="38" viewBox="0 0 26 38" stroke="#333" strokeWidth="2"><path d="M24 2 2 36" /></svg></LineBody>
                  <LineChevron><ChevronUp size={16} strokeWidth={1.500} /></LineChevron>
                </ToolBtn>
                <ToolBtn $ml={21}><SectionIcon /></ToolBtn>
                <ToolBtn $ml={21}><StampIcon /></ToolBtn>
                <ToolBtn $ml={20}><CartIcon /></ToolBtn>
              </Dock>
              <Help>?</Help>
            </Canvas>
          </Figma>
        </Content>
      </Main>
      <Taskbar>
        <Weather>
          <WeatherIcon />
          <WeatherText>4°C<span>Grotendeels be...</span></WeatherText>
        </Weather>
        <StartSlot><StartIcon /></StartSlot>
        <SearchPill><Search size={18} strokeWidth={1.800} />Zoeken</SearchPill>
        {dockBar.map(d => (
          <TaskSlot key={d.k}>{icons[d.k]}{d.run && <RunDot />}</TaskSlot>
        ))}
        <TaskSlot $active><span style={{ color: red, display: "flex" }}><OperaMark s={30} w={1.8} /></span><RunDot $active /></TaskSlot>
        <TaskSlot>{icons.fl}</TaskSlot>
        <TaskSlot>{icons.mon}<RunDot /></TaskSlot>
        <TaskSlot>{icons.word}<RunDot /></TaskSlot>
        <Tray>
          <TrayIcon><ChevronUp size={22} strokeWidth={1.300} /></TrayIcon>
          <TrayIcon $ml={2}><Cloud size={20} fill="#e6e6e6" strokeWidth={1} /></TrayIcon>
          <TrayIcon $ml={7}><Wifi size={21} strokeWidth={1.700} /></TrayIcon>
          <TrayIcon><Volume2 size={20} strokeWidth={1.300} /></TrayIcon>
          <TrayIcon $ml={4}><BatteryHalf /></TrayIcon>
          <ClockBox>10:39<br />19-1-2023</ClockBox>
          <Badge>1</Badge>
        </Tray>
      </Taskbar>
    </Screen>
  );
}
